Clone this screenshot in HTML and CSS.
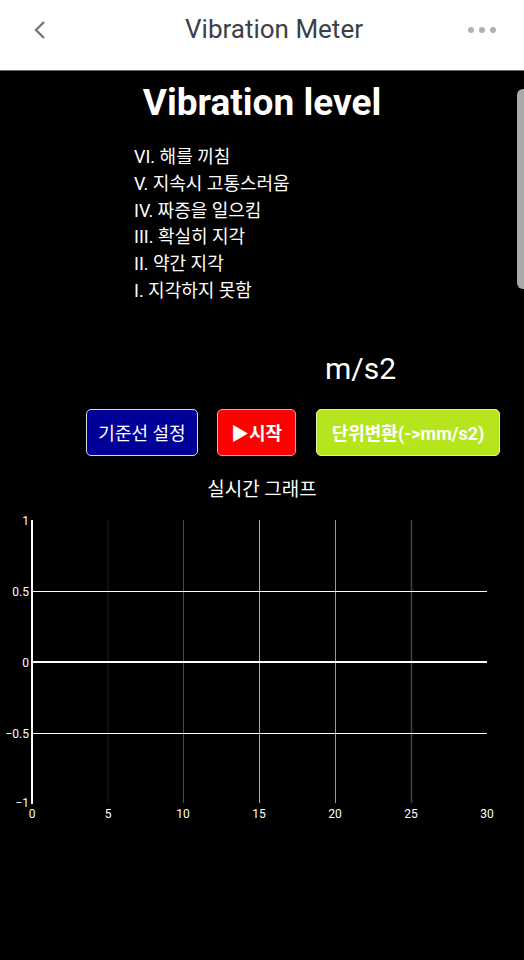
FILE: index.html
```html
<!DOCTYPE html>
<html lang="ko">
<head>
  <meta charset="UTF-8">
  <title>Vibration Meter</title>
  <link rel="stylesheet" href="styles.css">
</head>
<body>
  <!-- 상단 바 -->
  <div class="topBar">
    <div class="backBtn">
      <svg width="14" height="20" viewBox="0 0 14 20"><path d="M11 2 L3 10 L11 18" fill="none" stroke="#777" stroke-width="2.4"/></svg>
    </div>
    <div class="topTitle">Vibration Meter</div>
    <div class="moreBtn"><span></span><span></span><span></span></div>
  </div>

  <div class="scrollThumb"></div>

  <div class="content">
    <h1 class="levelTitle">Vibration level</h1>
    <ul class="levelList">
      <li>VI. 해를 끼침</li>
      <li>V. 지속시 고통스러움</li>
      <li>IV. 짜증을 일으킴</li>
      <li>III. 확실히 지각</li>
      <li>II. 약간 지각</li>
      <li>I. 지각하지 못함</li>
    </ul>

    <div class="unitText">m/s2</div>

    <div class="buttonRow">
      <button class="btn btnBase">기준선 설정</button>
      <button class="btn btnStart">▶시작</button>
      <button class="btn btnUnit">단위변환(-&gt;mm/s2)</button>
    </div>

    <div class="graphTitle">실시간 그래프</div>

    <svg class="graph" width="524" height="320" viewBox="0 0 524 320">
      <!-- 세로 격자 -->
      <line x1="108" y1="15" x2="108" y2="298" stroke="#1e1e1e" stroke-width="1"/>
      <line x1="183.5" y1="15" x2="183.5" y2="298" stroke="#4a4a4a" stroke-width="1"/>
      <line x1="259.5" y1="15" x2="259.5" y2="298" stroke="#aaa" stroke-width="1"/>
      <line x1="335.5" y1="15" x2="335.5" y2="298" stroke="#999" stroke-width="1"/>
      <line x1="411.5" y1="15" x2="411.5" y2="298" stroke="#444" stroke-width="1.5"/>
      <!-- 가로 격자 -->
      <line x1="33" y1="86.5" x2="487" y2="86.5" stroke="#fff" stroke-width="1"/>
      <line x1="33" y1="157" x2="487" y2="157" stroke="#fff" stroke-width="2"/>
      <line x1="33" y1="228.5" x2="487" y2="228.5" stroke="#fff" stroke-width="1"/>
      <!-- y축 -->
      <line x1="32" y1="15" x2="32" y2="299" stroke="#fff" stroke-width="2"/>

      <g class="yLabels" text-anchor="end">
        <text x="29" y="20">1</text>
        <text x="29" y="91">0.5</text>
        <text x="29" y="162">0</text>
        <text x="29" y="233">−0.5</text>
        <text x="29" y="302">−1</text>
      </g>
      <g class="xLabels" text-anchor="middle">
        <text x="32" y="313">0</text>
        <text x="108" y="313">5</text>
        <text x="183" y="313">10</text>
        <text x="259" y="313">15</text>
        <text x="335" y="313">20</text>
        <text x="411" y="313">25</text>
        <text x="487" y="313">30</text>
      </g>
    </svg>
  </div>
</body>
</html>
```

FILE: styles.css
```css
html, body {
  margin: 0;
  background-color: black;
  font-family: Roboto, "Noto Sans CJK KR", sans-serif;
  color: white;
}

.topBar {
  display: flex;
  align-items: center;
  height: 58px;
  padding-bottom: 12px;
  background-color: white;
  border-bottom: 1px solid #666;
}

.backBtn {
  width: 80px;
  display: flex;
  justify-content: center;
  padding-top: 2px;
}

.topTitle {
  flex: 1;
  text-align: center;
  font-size: 26px;
  color: #3c4046;
}

.moreBtn {
  width: 56px;
  display: flex;
  gap: 5px;
  padding-top: 2px;
}

.moreBtn span {
  width: 6px;
  height: 6px;
  border-radius: 50%;
  background-color: #b0b0b0;
}

.scrollThumb {
  position: absolute;
  top: 89px;
  right: 0;
  width: 7px;
  height: 200px;
  border-radius: 6px 0 0 6px;
  background-color: #aaa;
}

.content {
  display: flex;
  flex-direction: column;
}

.levelTitle {
  margin: 10px 0 0 0;
  text-align: center;
  font-size: 37px;
  font-weight: bold;
  line-height: 44px;
}

.levelList {
  list-style: none;
  margin: 19px 0 0 0;
  padding: 0 0 0 134px;
  font-size: 18px;
  line-height: 26.8px;
}

.unitText {
  margin-top: 46px;
  padding-left: 325px;
  font-size: 30px;
  line-height: 36px;
}

.buttonRow {
  display: flex;
  gap: 19px;
  margin-top: 22px;
  padding-left: 86px;
}

.btn {
  height: 47px;
  border: 1px solid #ddd;
  border-radius: 5px;
  color: white;
  font-family: Roboto, "Noto Sans CJK KR", sans-serif;
  font-size: 18px;
  padding: 0;
}

.btnBase {
  width: 112px;
  background-color: #000099;
}

.btnStart {
  width: 79px;
  background-color: #ff0000;
  font-weight: bold;
  border-color: #f0a0a0;
}

.btnUnit {
  width: 184px;
  margin-left: 1px;
  background-color: #b5e61d;
  font-weight: bold;
  border-color: #e0f0b0;
}

.graphTitle {
  margin-top: 23px;
  text-align: center;
  font-size: 19px;
  line-height: 22px;
}

.graph {
  display: block;
  margin-top: 4px;
}

.graph text {
  fill: white;
  font-family: Roboto, sans-serif;
  font-size: 12px;
}
```
